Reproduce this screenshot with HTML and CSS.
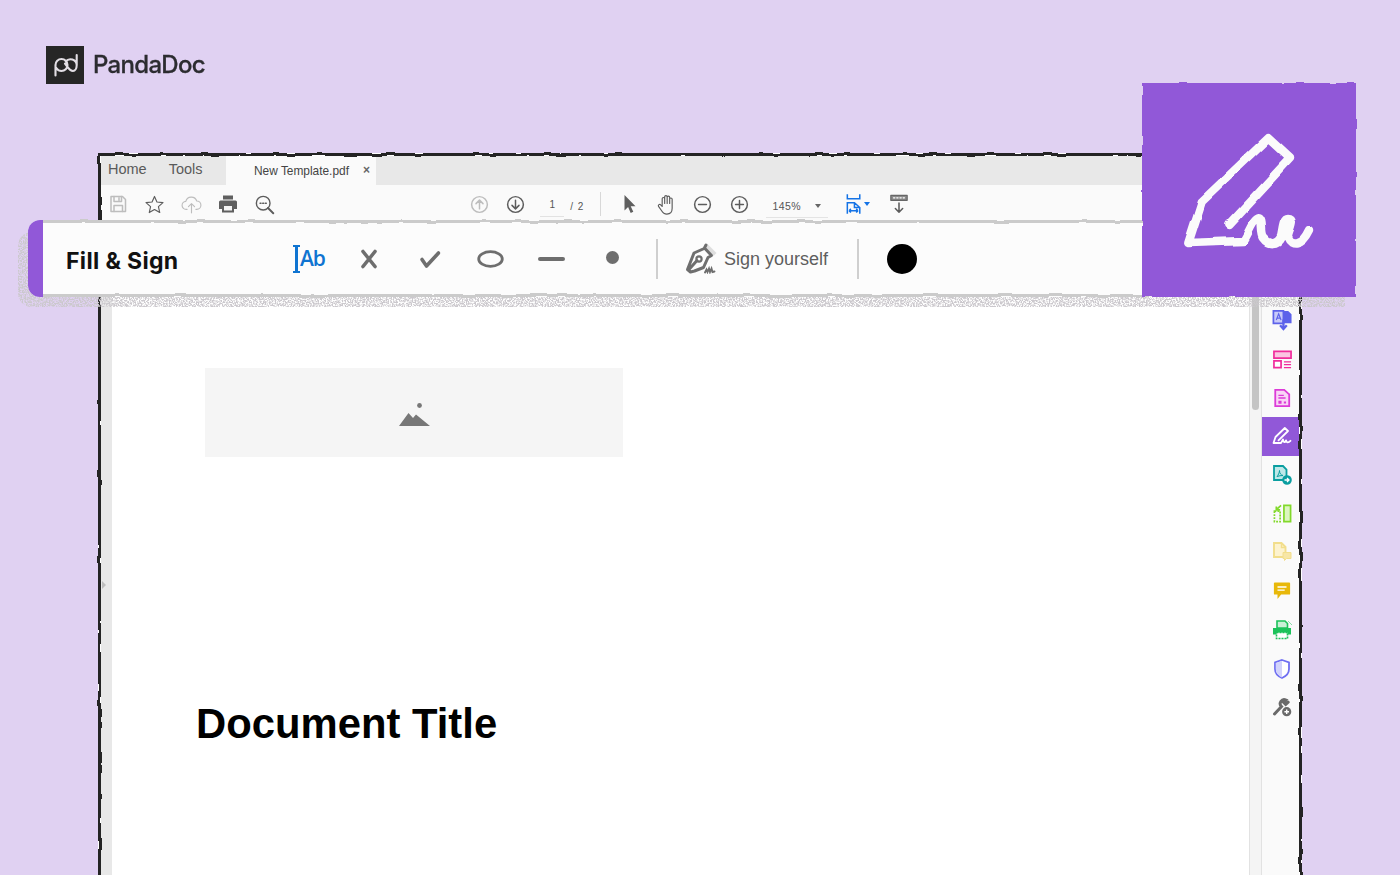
FILE: index.html
```html
<!DOCTYPE html>
<html lang="en">
<head>
<meta charset="utf-8">
<title>PandaDoc – Fill &amp; Sign</title>
<link rel="stylesheet" href="styles.css">
</head>
<body>
<svg class="defs" aria-hidden="true">
  <filter id="rough" x="-2%" y="-2%" width="104%" height="104%" color-interpolation-filters="sRGB">
    <feTurbulence type="fractalNoise" baseFrequency="0.07" numOctaves="1" seed="4" result="n"/>
    <feDisplacementMap in="SourceGraphic" in2="n" scale="4" xChannelSelector="R" yChannelSelector="G" result="d"/>
    <feGaussianBlur in="d" stdDeviation="0.4"/>
  </filter>
  <filter id="rough-soft" x="-3%" y="-3%" width="106%" height="106%" color-interpolation-filters="sRGB">
    <feTurbulence type="fractalNoise" baseFrequency="0.06" numOctaves="1" seed="9" result="n"/>
    <feDisplacementMap in="SourceGraphic" in2="n" scale="3.500" xChannelSelector="R" yChannelSelector="G" result="d"/>
    <feGaussianBlur in="d" stdDeviation="0.45"/>
  </filter>
  <filter id="rough-pen" x="-3%" y="-3%" width="106%" height="106%" color-interpolation-filters="sRGB">
    <feTurbulence type="fractalNoise" baseFrequency="0.045" numOctaves="1" seed="12" result="n"/>
    <feDisplacementMap in="SourceGraphic" in2="n" scale="5" xChannelSelector="R" yChannelSelector="G" result="d"/>
    <feGaussianBlur in="d" stdDeviation="0.6"/>
  </filter>
  <filter id="speckle" x="0" y="0" width="100%" height="100%">
    <feTurbulence type="fractalNoise" baseFrequency="0.7" numOctaves="2" seed="3" result="n"/>
    <feColorMatrix in="n" type="matrix" values="0 0 0 0 0.6  0 0 0 0 0.58  0 0 0 0 0.61  0 0 0 4 -1.45" result="d"/>
    <feComposite in="d" in2="SourceAlpha" operator="in"/>
  </filter>
</svg>

<main class="stage">
  <header class="brand">
    <span class="brand-mark">
      <svg viewBox="0 0 38 38" width="38" height="38"><path d="M9.500 29.500V19a6 6 0 1 1 6 6c-2.500 0-4-1.200-5-2.800M19 17.500c3 4 4.500 7.500 8 7.500a3.800 6 0 0 0 3.700-6V9M30.700 19a6.200 6 0 0 0-11-3.500" fill="none" stroke="#e2dee4" stroke-width="2.100" stroke-linecap="round"/></svg>
    </span>
    <span class="brand-name">PandaDoc</span>
  </header>

  <section class="window">
    <nav class="tabs">
      <div class="tabs-home"><span>Home</span><span>Tools</span></div>
      <div class="tab"><span>New Template.pdf</span><b>×</b></div>
    </nav>

    <div class="toolbar">
      <div class="tool-group first">
        <span class="cell"><svg viewBox="0 0 20 20" class="ic ic-save muted"><path d="M3 2.500h11.500L17.500 5.500V17.500H3z"/><path d="M6 2.500v5h7.500v-5M11 3.800v2.400M6 17.500v-6h8.500v6"/></svg></span>
        <span class="cell"><svg viewBox="0 0 24 24" class="ic ic-lg dark"><path d="M12 2.800l2.800 6.300 6.900.7-5.200 4.600 1.500 6.800-6-3.500-6 3.500 1.500-6.800-5.200-4.600 6.900-.7z"/></svg></span>
        <span class="cell"><svg viewBox="0 0 24 24" class="ic ic-lg muted"><path d="M7 17.500H6a4.500 4.500 0 0 1-.5-9A6.500 6.500 0 0 1 18 8a4.700 4.700 0 0 1 0 9.500h-1M12 21.500V11M8.500 14.500L12 11l3.500 3.500"/></svg></span>
        <span class="cell"><svg viewBox="0 0 20 20" class="ic-solid"><path d="M5 1.500h10v4H5zM2.500 6.500h15a1.500 1.500 0 0 1 1.500 1.500v7h-3v3.500H4V15H1V8a1.500 1.500 0 0 1 1.500-1.500z" fill="#5f5f5f"/><path d="M6 12h8v4.500H6z" fill="#f4f4f4"/></svg></span>
        <span class="cell"><svg viewBox="0 0 24 24" class="ic ic-lg dark"><circle cx="10.500" cy="10.500" r="7.800" stroke-width="1.600"/><path d="M16 16l6 6" stroke-width="2.200"/><path d="M7 10.500h1M10 10.500h1M13 10.500h1" stroke-width="1.800"/></svg></span>
      </div>

      <div class="tool-group nav-group">
        <span class="cell"><svg viewBox="0 0 24 24" class="ic ic-lg muted strong"><circle cx="12" cy="12" r="9"/><path d="M12 17V7.500M8 11l4-4 4 4"/></svg></span>
        <span class="cell"><svg viewBox="0 0 24 24" class="ic ic-lg dark strong"><circle cx="12" cy="12" r="9"/><path d="M12 7v9.500M8 13l4 4 4-4"/></svg></span>
        <span class="page-num">1</span>
        <span class="page-total">/ 2</span>
      </div>
      <i class="tb-sep"></i>
      <div class="tool-group hand-group">
        <span class="cell"><svg viewBox="0 0 20 20" class="ic-solid"><path d="M5.500 1v15.500l3.600-3.500 2.600 6 2.600-1.200-2.600-5.500h4.800z" fill="#5f5f5f"/></svg></span>
        <span class="cell"><svg viewBox="0 0 24 24" class="ic ic-hand dark thin"><path d="M7.500 14V6a1.300 1.300 0 0 1 2.600 0v5M10.100 10V4a1.300 1.300 0 0 1 2.600 0v7M12.700 10.500V4.500a1.300 1.300 0 0 1 2.600 0V11M15.300 11V6.500a1.300 1.300 0 0 1 2.600 0V16c0 3.500-2 6-5.500 6-2.800 0-4.300-1.300-5.500-3.500L3.700 14a1.400 1.400 0 0 1 2.200-1.700L7.500 14"/></svg></span>
        <span class="cell"><svg viewBox="0 0 24 24" class="ic ic-lg dark strong"><circle cx="12" cy="12" r="9"/><path d="M7.500 12h9"/></svg></span>
        <span class="cell"><svg viewBox="0 0 24 24" class="ic ic-lg dark strong"><circle cx="12" cy="12" r="9"/><path d="M7.500 12h9M12 7.500v9"/></svg></span>
      </div>
      <div class="zoom-box"><span>145%</span><i class="caret"></i></div>
      <span class="fit">
        <svg viewBox="0 0 18 22" width="16" height="20" class="ic-fit"><path d="M1.500 0v5h14V0M1.500 22V9.500h8L15.500 15v7M9.500 9.500V15h6M3.500 18.500h10M3.500 18.500l2-2M3.500 18.500l2 2M13.500 18.500l-2-2M13.500 18.500l-2 2"/></svg>
        <i class="caret blue"></i>
      </span>
      <span class="cell keyboard"><svg viewBox="0 0 22 22" width="20" height="20" class="ic dark keyb"><path d="M2 1.500h18v5.500H2z" fill="#8a8a8a" stroke="#666"/><path d="M5 4.200h1.500M8.500 4.200H10M12 4.200h1.500M15.500 4.200H17" stroke="#fff" stroke-width="1.300"/><path d="M11 10v10M7 16l4 4 4-4" stroke-width="1.700"/></svg></span>
    </div>

    <div class="workspace">
      <div class="gutter"><i class="gutter-arrow"></i></div>
      <article class="page">
        <div class="placeholder">
          <svg viewBox="0 0 31 23" width="31" height="23"><circle cx="20.500" cy="2.500" r="2.400" fill="#777"/><path d="M0 23l9.500-13 4.500 5 3-3.500L31 23z" fill="#777"/></svg>
        </div>
        <h1 class="doc-title">Document Title</h1>
      </article>
      <div class="scrollbar"><i class="thumb"></i></div>
      <aside class="side">
        <span class="side-item"><svg viewBox="0 0 20 22" width="20" height="21"><path d="M1 1h10.500v13H1z" fill="#c8caf9" stroke="#5d62ea" stroke-width="1.800"/><path d="M11 1h5.500L20 4.500V14H11z" fill="#5d62ea"/><path d="M4 10.500l2.500-6.500L9 10.500M5 8.500h3" fill="none" stroke="#5d62ea" stroke-width="1.200"/><path d="M11.500 10v9M8 16l3.500 4 3.500-4" fill="none" stroke="#5d62ea" stroke-width="2.400"/></svg></span>
        <span class="side-item"><svg viewBox="0 0 20 20" width="19" height="19"><path d="M1 1.500h18v7H1z" fill="#fbc4e2" stroke="#f02c9c" stroke-width="1.800"/><path d="M1 11.500h7.500v7H1z" fill="#fff" stroke="#f02c9c" stroke-width="1.800"/><path d="M11.500 12.500H19M11.500 15.500H19M11.500 18.500H19" stroke="#f02c9c" stroke-width="1.300"/></svg></span>
        <span class="side-item"><svg viewBox="0 0 20 20" width="18" height="18"><path d="M2.500 1h10L18 6v13H2.500z" fill="#f9d5f6" stroke="#dc3bd8" stroke-width="2"/><path d="M6 7h6M6 10h8" stroke="#dc3bd8" stroke-width="1.400"/><path d="M6 13h3.500v3.500H6zM12 14h2.500v2H12z" fill="#dc3bd8"/></svg></span>
        <span class="side-item active"><svg viewBox="0 0 20 20" width="20" height="20"><path d="M1.500 17L3.500 11 12.800 2l3.200 3-9.500 9.300M1.500 17H9L11 13.500c.5 3 2 3.800 3 .8.500 2.500 2 2.800 4.500.5" fill="none" stroke="#fff" stroke-width="1.800" stroke-linecap="round" stroke-linejoin="round"/></svg></span>
        <span class="side-item"><svg viewBox="0 0 20 20" width="20" height="20"><path d="M2 1h9l3.500 3.500V15H2z" fill="#bfe8e8" stroke="#0a9ea0" stroke-width="1.800"/><path d="M5 11.500c1-1 2.500-4 2.500-6 0 3 1.500 4.500 3.500 5-2 0-4 .3-6 1z" fill="none" stroke="#0a9ea0"/><circle cx="15" cy="15" r="4.800" fill="#0a9ea0"/><path d="M12.500 15h4.500M15 13l2 2-2 2" fill="none" stroke="#fff" stroke-width="1.300"/></svg></span>
        <span class="side-item"><svg viewBox="0 0 20 20" width="19" height="19"><path d="M1.500 7.500h6v11h-6z" fill="none" stroke="#82d92b" stroke-width="1.800" stroke-dasharray="2 1.200"/><path d="M11.500 1.500h7v17h-7z" fill="#dcf6c0" stroke="#82d92b" stroke-width="1.800"/><path d="M8.500 1.500l-5 4.500M3.500 2.500v3.700h4" fill="none" stroke="#82d92b" stroke-width="1.800"/></svg></span>
        <span class="side-item"><svg viewBox="0 0 20 20" width="20" height="20"><path d="M2 1h7.500L13.500 5V15H2z" fill="#fdf3cf" stroke="#f2de8c" stroke-width="1.900"/><path d="M9.500 1v4.500h4" fill="none" stroke="#f2de8c" stroke-width="1.400"/><path d="M11 10.500h8v6h-4.500l-2 2v-2H11z" fill="#f7e6a6" stroke="#f2de8c"/></svg></span>
        <span class="side-item"><svg viewBox="0 0 20 20" width="18" height="18"><path d="M1 1.500a1 1 0 0 1 1-1h16a1 1 0 0 1 1 1V13a1 1 0 0 1-1 1H9l-4 5v-5H2a1 1 0 0 1-1-1z" fill="#e8b80a"/><path d="M5 5.500h10M5 9h8" stroke="#fff" stroke-width="1.600"/></svg></span>
        <span class="side-item"><svg viewBox="0 0 20 20" width="20" height="20"><path d="M5 1h8l2.500 2.500V8H5z" fill="#c9f0d6" stroke="#1cc25a" stroke-width="1.600"/><path d="M1 8h18v6.500H1z" fill="#1cc25a"/><path d="M4.500 12.500h11v6h-11z" fill="#fff" stroke="#1cc25a" stroke-width="1.600" stroke-dasharray="2 1"/><path d="M16.500 1.500l1 1M18.500 3.500l1 1" stroke="#1cc25a"/></svg></span>
        <span class="side-item"><svg viewBox="0 0 20 20" width="20" height="20"><path d="M10 1l7 2.500V10c0 4.500-3.500 7.500-7 9-3.500-1.500-7-4.500-7-9V3.500z" fill="#fff" stroke="#6f6ff2" stroke-width="1.800"/><path d="M10 2v16.500c-3-1.400-6.200-4.300-6.200-8.500V4z" fill="#d2d3fb"/></svg></span>
        <span class="side-item"><svg viewBox="0 0 20 20" width="20" height="20"><path d="M2.500 17L9.500 9.500a4 4 0 0 1 4.500-6.500l-2.300 2.500 2 2 2.500-2.300" fill="none" stroke="#6a6a6a" stroke-width="3" stroke-linecap="round"/><circle cx="14.700" cy="14.700" r="4.600" fill="#6a6a6a"/><path d="M12.400 14.700h4.600M14.700 12.400v4.600" stroke="#fff" stroke-width="1.400"/></svg></span>
      </aside>
    </div>
    <i class="window-frame"></i>
  </section>

  <div class="bar-shadow"></div>

  <section class="bar">
    <i class="bar-edge"></i>
    <i class="bar-accent"></i>
    <h2 class="bar-title">Fill &amp; Sign</h2>
    <div class="bar-tools">
      <span class="text-tool"><i class="beam"></i><b>Ab</b></span>
      <span class="bar-cell"><svg viewBox="0 0 20 20" width="20" height="20" class="bt"><path d="M4 2.500l12 15M16 2.500L4 17.500" stroke-width="3.600"/></svg></span>
      <span class="bar-cell"><svg viewBox="0 0 24 20" width="24" height="20" class="bt"><path d="M4 10.500l4.500 6.500L20.500 4" stroke-width="3.600"/></svg></span>
      <span class="bar-cell"><svg viewBox="0 0 27 18" width="27" height="18" class="bt"><ellipse cx="13.500" cy="9" rx="11.800" ry="7.300" stroke-width="2.800"/></svg></span>
      <span class="bar-cell"><svg viewBox="0 0 27 6" width="27" height="6" class="bt"><path d="M2 3h23" stroke-width="4"/></svg></span>
      <span class="bar-cell"><i class="dot"></i></span>
    </div>
    <i class="bar-sep first-sep"></i>
    <div class="sign">
      <svg viewBox="0 0 34 32" width="34" height="32" class="pen"><path d="M22 1.500l9.500 9.500-3 3-9.500-9.500z" fill="#dedede" stroke="none"/><path d="M21 3l-1.800 3.500L9 11 2.500 27.500l3 2.500 4-1 9-3.500 4.500-10 3.500-2M19.500 6l7 7.500M3.500 28L12 18.500" fill="none" stroke="#6e6e6e" stroke-width="3" stroke-linejoin="round" stroke-linecap="round"/><circle cx="14" cy="17" r="2.600" fill="none" stroke="#6e6e6e" stroke-width="2.200"/><path d="M20 30.500l1.500-3 1 2.500 1.500-3.500 1 3.500 1.500-3.500 1 3.500 2-.5" fill="none" stroke="#6e6e6e" stroke-width="1.900" stroke-linecap="round"/></svg>
      <span>Sign yourself</span>
    </div>
    <i class="bar-sep"></i>
    <i class="swatch"></i>
  </section>

  <aside class="badge">
    <i class="badge-bg"></i>
    <svg class="badge-pen" viewBox="0 0 214 214" width="214" height="214"><path d="M46.300 160L59.700 118.700 126.300 55.300 148 75.300 86.300 142M46.300 160L101.300 158C106 152 110 138 116.300 135.300 122 136 118 150 122 155 127 162 135 162 139 154 141 146 141 136 146 136 155 136 145 150 146 155 149 163 160 164 168 147" fill="none" stroke="#fbfbfb" stroke-width="8.500" stroke-linecap="round" stroke-linejoin="round"/></svg>
  </aside>
</main>
</body>
</html>
```

FILE: styles.css
```css
* { box-sizing: border-box; }
html, body { margin: 0; height: 100%; }
body { overflow: hidden; background: #e0d1f2; font-family: "Liberation Sans", Arial, sans-serif; }
.defs { position: absolute; width: 0; height: 0; }

.stage { position: relative; height: 875px; overflow: hidden; padding: 46px 0 0 46px; filter: blur(.3px); }

/* brand */
.brand { display: flex; align-items: center; gap: 9px; height: 38px; }
.brand-mark { display: block; width: 38px; height: 38px; background: #262626; }
.brand-mark svg { display: block; }
.brand-name { font: 500 24px "Inter", sans-serif; color: #2c2c30; letter-spacing: -0.7px; margin-top: -2px; -webkit-text-stroke: .3px #2c2c30; }

/* application window */
.window { position: relative; width: 1204px; height: 780px; margin: 69px 0 0 52px; background: #fff; display: flex; flex-direction: column; padding: 3px; }
.window-frame { position: absolute; inset: 0; border: 3px solid #242424; filter: url(#rough); pointer-events: none; }

.tabs { display: flex; height: 29px; background: #e8e8e8; flex: none; }
.tabs-home { display: flex; gap: 22px; width: 125px; padding: 5px 0 0 7px; font-size: 14.500px; color: #5a5a5a; }
.tab { width: 150px; background: #fafafa; display: flex; justify-content: space-between; padding: 8px 6px 0 28px; font-size: 11.900px; color: #444; }
.tab b { font-weight: 700; color: #666; font-size: 12px; margin-top: -1px; }

.toolbar { height: 38px; background: #fafafa; display: flex; align-items: flex-start; padding: 3px 0 0 0; flex: none; }
.tool-group { display: flex; align-items: center; }
.first { margin-left: 0; }
.nav-group { margin-left: 178px; }
.cell { width: 36.600px; height: 32px; display: flex; align-items: center; justify-content: center; flex: none; }
.first .cell:first-child { margin-left: -1px; }
.ic { width: 18px; height: 18px; fill: none; stroke-width: 1.300; stroke-linecap: round; stroke-linejoin: round; }
.ic-lg { width: 21px; height: 21px; }
.ic-save { width: 20px; height: 20px; stroke-width: 1.500; }
.ic-hand { width: 23px; height: 23px; }
.muted { stroke: #bdbdbd; }
.dark { stroke: #5c5c5c; }
.strong { stroke-width: 1.700; }
.thin { stroke-width: 1.200; }
.ic-solid { width: 20px; height: 20px; }
.page-num { width: 24px; margin: 4px 0 0 6px; height: 22px; text-align: center; font-size: 10px; line-height: 20px; color: #555; border-bottom: 1px solid #e2e2e2; }
.page-total { margin: 4px 0 0 6px; font-size: 10px; color: #555; letter-spacing: 1px; width: 24px; }
.tb-sep { width: 1px; height: 24px; background: #d8d8d8; margin: 4px 0 0 6px; }
.hand-group { margin-left: 10px; }
.zoom-box { width: 62px; height: 23px; margin: 7px 0 0 8px; border-bottom: 1px solid #e4e4e4; display: flex; align-items: center; justify-content: space-between; padding: 0 7px; font-size: 10.500px; color: #555; letter-spacing: .4px; }
.caret { display: block; width: 0; height: 0; border: 3px solid transparent; border-top: 4px solid #666; border-bottom: 0; }
.caret.blue { border-top-color: #1473e6; }
.fit { display: flex; align-items: center; gap: 2px; margin: 6px 0 0 18px; }
.fit svg { display: block; }
.ic-fit { fill: none; stroke: #1473e6; stroke-width: 1.700; }
.keyboard { margin-left: 11px; }
.keyb { width: 20px; height: 20px; }

/* workspace */
.workspace { flex: 1; display: flex; min-height: 0; }
.gutter { width: 11px; background: #e8e8e8; flex: none; position: relative; }
.gutter-arrow { position: absolute; left: 1px; top: 358px; border: 4px solid transparent; border-left: 4px solid #bdbdbd; border-right: 0; }
.page { flex: 1; background: #fff; padding: 145px 0 0 93px; }
.placeholder { width: 418px; height: 89px; background: #f5f5f5; display: flex; align-items: center; justify-content: center; padding-top: 3px; }
.placeholder svg { display: block; }
.doc-title { margin: 242px 0 0 -9px; font-size: 41.800px; line-height: 50px; font-weight: 700; color: #000; }
.scrollbar { width: 13px; background: #f4f4f4; border-left: 1px solid #e2e2e2; border-right: 1px solid #e2e2e2; flex: none; padding-left: 2px; }
.thumb { display: block; width: 7px; height: 187px; background: #c4c4c4; border-radius: 0 0 4px 4px; }
.side { width: 37px; background: #fafafa; flex: none; padding-top: 78px; display: flex; flex-direction: column; }
.side-item { height: 38.700px; display: flex; align-items: center; justify-content: center; flex: none; padding-left: 3px; }
.side-item svg { display: block; }
.active { background: #9158d8; }

/* overlapping Fill & Sign bar */
.bar-shadow { position: absolute; left: 18px; top: 232px; width: 1327px; height: 75px; background: #000; filter: url(#speckle); border-radius: 14px 0 0 14px; }
.bar { position: absolute; left: 28px; top: 220px; width: 1116px; height: 77px; background: #fcfcfc; display: flex; align-items: center; border-radius: 12px 0 0 12px; padding-left: 38px; }
.bar-edge { position: absolute; left: 15px; right: 0; top: 0; bottom: 0; border-top: 3px solid #cbcbcb; border-bottom: 3px solid #cbcbcb; filter: url(#rough-soft); }
.bar-accent { position: absolute; left: 0; top: 0; bottom: 0; width: 15px; background: #9158d8; border-radius: 12px 0 0 12px; }
.bar-title { margin: 4px 0 0 0; width: 227px; font: 700 23px "Inter", sans-serif; color: #111; letter-spacing: .35px; flex: none; }
.bar-tools { display: flex; align-items: center; width: 364px; flex: none; }
.text-tool { position: relative; display: block; width: 33px; height: 28px; margin-right: 12px; color: #0f74d1; flex: none; }
.beam { position: absolute; left: 0; top: 0; width: 7px; height: 28px; border-top: 2.500px solid #0f74d1; border-bottom: 2.500px solid #0f74d1; background: linear-gradient(#0f74d1, #0f74d1) center / 3px 100% no-repeat; }
.text-tool b { position: absolute; left: 7px; top: 1px; font: 600 21px "Open Sans", sans-serif; line-height: 24px; letter-spacing: -1.200px; }
.bar-cell { width: 61px; display: flex; align-items: center; justify-content: center; flex: none; height: 30px; }
.bar-cell svg { display: block; }
.bt { fill: none; stroke: #6e6e6e; stroke-linecap: round; stroke-linejoin: round; }
.dot { display: block; width: 13px; height: 13px; margin: -2px 1px 0 0; background: #6e6e6e; border-radius: 50%; }
.bar-sep { display: block; width: 2px; height: 40px; background: #cfcfcf; flex: none; margin-top: 0; }
.first-sep { margin-left: -1px; }
.sign { display: flex; align-items: center; gap: 5px; width: 199px; padding-left: 27px; font-size: 18px; color: #5e5e5e; flex: none; }
.sign span { margin-top: 1px; }
.pen { display: block; flex: none; margin-top: -1px; }
.swatch { display: block; width: 30px; height: 30px; margin: 0 0 0 28px; border-radius: 50%; background: #000; flex: none; }

/* purple badge */
.badge { position: absolute; left: 1142px; top: 83px; width: 214px; height: 214px; }
.badge-bg { position: absolute; inset: 0; background: #9158d8; filter: url(#rough-soft); }
.badge-pen { position: relative; display: block; filter: url(#rough-pen); }
```
